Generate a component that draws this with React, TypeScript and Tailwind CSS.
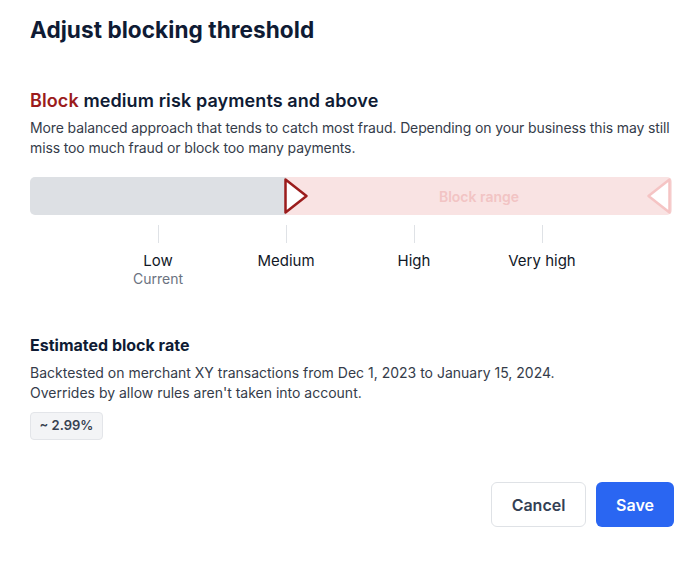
import React from 'react';

const ticks = [
    { label: 'Low', sub: 'Current' },
    { label: 'Medium' },
    { label: 'High' },
    { label: 'Very high' },
];

function Handle({ dir, color }: { dir: 'right' | 'left'; color: string }) {
    const points = dir === 'right' ? '2.5,2.5 23.5,19 2.5,35.5' : '23.5,2.5 2.5,19 23.5,35.5';
    return (
        <svg width="26" height="38" viewBox="0 0 26 38">
            <polygon points={points} fill="#ffffff" stroke={color} strokeWidth="2.5" strokeLinejoin="round" />
        </svg>
    );
}

export default function App() {
    return (
        <div className="w-[698px] h-[570px] bg-white px-[30px] pt-4 text-[#353c4a]" style={{ fontFamily: 'Inter, "Noto Sans", sans-serif' }}>
            <h1 className="text-[22.6px] leading-[28px] font-bold text-[#0f1b34] tracking-[0.05px]">Adjust blocking threshold</h1>

            <h2 className="mt-[45px] text-[18px] leading-[24px] font-semibold text-[#0f1b34] tracking-[0.1px]">
                <span className="text-[#9b1c1c]">Block</span> medium risk payments and above
            </h2>
            <p className="mt-[5px] w-[660px] text-[14px] leading-[20px] tracking-[-0.12px]">
                More balanced approach that tends to catch most fraud. Depending on your business this may still
                <br />
                miss too much fraud or block too many payments.
            </p>

            {/* Threshold bar */}
            <div className="relative mt-[19px] flex h-[38px] w-[642px]">
                <div className="w-[256px] rounded-l-[5px] bg-[#dde0e4]" />
                <div className="flex flex-1 items-center justify-center rounded-r-[5px] bg-[#f9e3e3] text-[14px] font-semibold text-[#f2c4c4]">
                    Block range
                </div>
                <div className="absolute left-[253px] top-0">
                    <Handle dir="right" color="#9b1c1c" />
                </div>
                <div className="absolute left-[616px] top-0">
                    <Handle dir="left" color="#f5c4c4" />
                </div>
            </div>

            <div className="mt-[10px] ml-[64px] flex">
                {ticks.map((t) => (
                    <div key={t.label} className="flex w-[128px] flex-col items-center">
                        <div className="h-[18px] w-px bg-[#dfe2e6]" />
                        <span className="mt-[9px] text-[15px] leading-[18px] text-[#111827]">{t.label}</span>
                        {t.sub && <span className="text-[14px] leading-[18px] text-[#6b7280]">{t.sub}</span>}
                    </div>
                ))}
            </div>

            <h3 className="mt-[45px] text-[16px] leading-[24px] font-bold text-[#0f1b34]">Estimated block rate</h3>
            <p className="mt-[6px] text-[14px] leading-[20px]">
                Backtested on merchant XY transactions from Dec 1, 2023 to January 15, 2024.
                <br />
                Overrides by allow rules aren't taken into account.
            </p>
            <div className="mt-[9px] inline-flex h-[28px] w-[73px] items-center justify-center rounded-[4px] border border-[#e3e5e9] bg-[#f3f4f6] text-[13px] font-semibold text-[#374151]">
                ~ 2.99%
            </div>

            <div className="mt-[42px] flex w-[644px] justify-end gap-[10px]">
                <button className="h-[45px] w-[95px] rounded-[6px] border border-[#dfe2e6] bg-white text-[16px] font-semibold text-[#344054]">
                    Cancel
                </button>
                <button className="h-[45px] w-[78px] rounded-[6px] bg-[#2a66f2] text-[16px] font-semibold text-white">
                    Save
                </button>
            </div>
        </div>
    );
}
